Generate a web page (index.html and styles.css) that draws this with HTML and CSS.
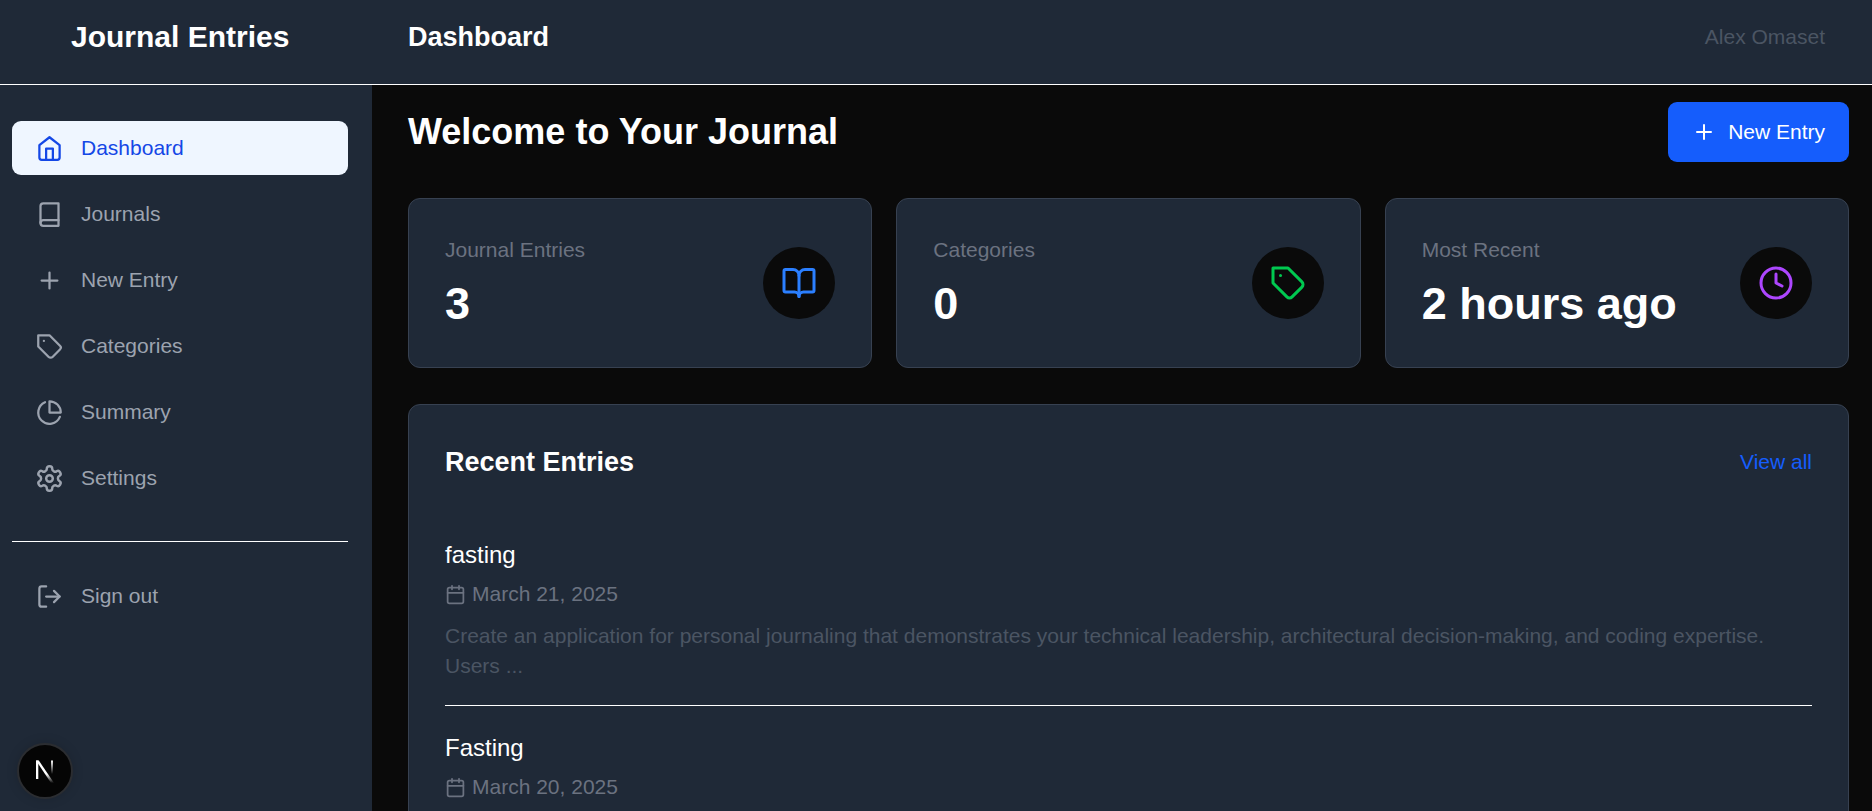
FILE: index.html
```html
<!DOCTYPE html>
<html lang="en">
<head>
  <meta charset="UTF-8">
  <title>Journal Entries</title>
  <link rel="stylesheet" href="styles.css">
</head>
<body>

  <header class="topbar">
    <div class="brand">Journal Entries</div>
    <div class="page-name">Dashboard</div>
    <div class="user-name">Alex Omaset</div>
  </header>

  <div class="layout">
    <aside class="sidebar">
      <nav class="nav">
        <a class="nav-item active">
          <svg class="nav-icon" viewBox="0 0 24 24"><path d="m3 9 9-7 9 7v11a2 2 0 0 1-2 2H5a2 2 0 0 1-2-2z"/><path d="M9 22V12h6v10"/></svg>
          Dashboard
        </a>
        <a class="nav-item">
          <svg class="nav-icon" viewBox="0 0 24 24"><path d="M4 19.500A2.500 2.500 0 0 1 6.500 17H20"/><path d="M6.500 2H20v20H6.500A2.500 2.500 0 0 1 4 19.500v-15A2.500 2.500 0 0 1 6.500 2z"/></svg>
          Journals
        </a>
        <a class="nav-item">
          <svg class="nav-icon" viewBox="0 0 24 24"><path d="M5 12h14"/><path d="M12 5v14"/></svg>
          New Entry
        </a>
        <a class="nav-item">
          <svg class="nav-icon" viewBox="0 0 24 24"><path d="M12 2H2v10l9.290 9.290c.94.94 2.480.94 3.420 0l6.580-6.580c.94-.94.94-2.480 0-3.420L12 2Z"/><path d="M7 7h.01"/></svg>
          Categories
        </a>
        <a class="nav-item">
          <svg class="nav-icon" viewBox="0 0 24 24"><path d="M21.21 15.89A10 10 0 1 1 8 2.83"/><path d="M22 12A10 10 0 0 0 12 2v10z"/></svg>
          Summary
        </a>
        <a class="nav-item">
          <svg class="nav-icon" viewBox="1 1 22 22"><path d="M12.22 2h-.44a2 2 0 0 0-2 2v.18a2 2 0 0 1-1 1.73l-.43.25a2 2 0 0 1-2 0l-.15-.08a2 2 0 0 0-2.73.73l-.22.38a2 2 0 0 0 .73 2.73l.15.1a2 2 0 0 1 1 1.72v.51a2 2 0 0 1-1 1.74l-.15.09a2 2 0 0 0-.73 2.73l.22.38a2 2 0 0 0 2.73.73l.15-.08a2 2 0 0 1 2 0l.43.25a2 2 0 0 1 1 1.73V20a2 2 0 0 0 2 2h.44a2 2 0 0 0 2-2v-.18a2 2 0 0 1 1-1.73l.43-.25a2 2 0 0 1 2 0l.15.08a2 2 0 0 0 2.73-.73l.22-.39a2 2 0 0 0-.73-2.73l-.15-.08a2 2 0 0 1-1-1.74v-.5a2 2 0 0 1 1-1.74l.15-.09a2 2 0 0 0 .73-2.73l-.22-.38a2 2 0 0 0-2.73-.73l-.15.08a2 2 0 0 1-2 0l-.43-.25a2 2 0 0 1-1-1.73V4a2 2 0 0 0-2-2z"/><circle cx="12" cy="12" r="2.700"/></svg>
          Settings
        </a>
      </nav>
      <div class="sidebar-footer">
        <a class="nav-item">
          <svg class="nav-icon" viewBox="0 0 24 24"><path d="M9 21H5a2 2 0 0 1-2-2V5a2 2 0 0 1 2-2h4"/><path d="m16 17 5-5-5-5"/><path d="M21 12H9"/></svg>
          Sign out
        </a>
      </div>
    </aside>

    <main class="content">
      <div class="content-head">
        <h1>Welcome to Your Journal</h1>
        <a class="new-btn">
          <svg class="btn-icon" viewBox="0 0 24 24"><path d="M5 12h14"/><path d="M12 5v14"/></svg>
          New Entry
        </a>
      </div>

      <div class="stats">
        <div class="stat-card">
          <div>
            <div class="stat-label">Journal Entries</div>
            <div class="stat-value">3</div>
          </div>
          <div class="stat-icon blue">
            <svg viewBox="0 0 24 24"><path d="M12 7v14"/><path d="M3 18a1 1 0 0 1-1-1V4a1 1 0 0 1 1-1h5a4 4 0 0 1 4 4 4 4 0 0 1 4-4h5a1 1 0 0 1 1 1v13a1 1 0 0 1-1 1h-6a3 3 0 0 0-3 3 3 3 0 0 0-3-3z"/></svg>
          </div>
        </div>
        <div class="stat-card">
          <div>
            <div class="stat-label">Categories</div>
            <div class="stat-value">0</div>
          </div>
          <div class="stat-icon green">
            <svg viewBox="0 0 24 24"><path d="M12 2H2v10l9.290 9.290c.94.94 2.480.94 3.420 0l6.580-6.580c.94-.94.94-2.480 0-3.420L12 2Z"/><path d="M7 7h.01"/></svg>
          </div>
        </div>
        <div class="stat-card">
          <div>
            <div class="stat-label">Most Recent</div>
            <div class="stat-value">2 hours ago</div>
          </div>
          <div class="stat-icon purple">
            <svg viewBox="0 0 24 24"><circle cx="12" cy="12" r="10"/><path d="M12 6v6l4 2"/></svg>
          </div>
        </div>
      </div>

      <section class="recent">
        <div class="recent-head">
          <h2>Recent Entries</h2>
          <a class="view-all">View all</a>
        </div>

        <article class="entry">
          <h3>fasting</h3>
          <div class="entry-date">
            <svg class="date-icon" viewBox="0 0 24 24"><path d="M8 2v4"/><path d="M16 2v4"/><rect x="3" y="4" width="18" height="18" rx="2"/><path d="M3 10h18"/></svg>
            March 21, 2025
          </div>
          <p>Create an application for personal journaling that demonstrates your technical leadership, architectural decision-making, and coding expertise. Users ...</p>
        </article>

        <article class="entry">
          <h3>Fasting</h3>
          <div class="entry-date">
            <svg class="date-icon" viewBox="0 0 24 24"><path d="M8 2v4"/><path d="M16 2v4"/><rect x="3" y="4" width="18" height="18" rx="2"/><path d="M3 10h18"/></svg>
            March 20, 2025
          </div>
        </article>
      </section>
    </main>
  </div>

  <div class="dev-badge">
    <svg viewBox="0 0 24 24">
      <defs>
        <linearGradient id="nDiag" x1="0" y1="0" x2="0" y2="1">
          <stop offset="0.6" stop-color="#fff"/>
          <stop offset="1" stop-color="#fff" stop-opacity="0"/>
        </linearGradient>
        <linearGradient id="nRight" x1="0" y1="0" x2="0" y2="1">
          <stop offset="0" stop-color="#fff"/>
          <stop offset="1" stop-color="#fff" stop-opacity="0"/>
        </linearGradient>
      </defs>
      <path class="n-left" d="M3 1.500h2.300V20H3z"/>
      <path class="n-diag" d="M3 1.500h2.800L21 24h-3z"/>
      <path class="n-right" d="M18 1.500h2V15h-2z"/>
    </svg>
  </div>

</body>
</html>
```

FILE: styles.css
```css
* {
  box-sizing: border-box;
}
html, body {
  height: 100%;
}
body {
  margin: 0;
  display: flex;
  flex-direction: column;
  overflow: hidden;
  font-family: "Liberation Sans", Arial, sans-serif;
  font-size: 21px;
  line-height: 30px;
  background: #0a0a0a;
  color: #fff;
}
svg {
  fill: none;
  stroke: currentColor;
  stroke-width: 2;
  stroke-linecap: round;
  stroke-linejoin: round;
  flex-shrink: 0;
}

/* top bar */
.topbar {
  display: flex;
  align-items: center;
  height: 85px;
  flex-shrink: 0;
  padding: 0 47px 10px 0;
  background: #1f2937;
  border-bottom: 1px solid #fff;
}
.brand {
  width: 372px;
  padding-left: 71px;
  font-size: 30px;
  font-weight: bold;
}
.page-name {
  flex: 1;
  padding-left: 36px;
  font-size: 27px;
  font-weight: bold;
}
.user-name {
  color: #4b5563;
}

.layout {
  flex: 1;
  display: flex;
  min-height: 0;
}

/* sidebar */
.sidebar {
  width: 372px;
  flex-shrink: 0;
  padding: 36px 24px 0 12px;
  background: #1f2937;
}
.nav {
  display: flex;
  flex-direction: column;
  gap: 12px;
}
.nav-item {
  display: flex;
  align-items: center;
  gap: 18px;
  height: 54px;
  padding: 0 24px;
  border-radius: 9px;
  color: #9ca3af;
}
.nav-item.active {
  background: #eff6ff;
  color: #1447e6;
}
.nav-icon {
  width: 27px;
  height: 27px;
}
.sidebar-footer {
  margin-top: 36px;
  padding-top: 27px;
  border-top: 1px solid #fff;
}

/* main */
.content {
  flex: 1;
  min-width: 0;
  overflow: hidden;
  padding: 17px 23px 0 36px;
}
.content-head {
  display: flex;
  align-items: center;
  justify-content: space-between;
  margin-bottom: 36px;
}
h1 {
  margin: 0;
  font-size: 36px;
  line-height: 54px;
}
.new-btn {
  display: flex;
  align-items: center;
  gap: 12px;
  padding: 15px 24px;
  border-radius: 9px;
  background: #155dfc;
  color: #fff;
}
.btn-icon {
  width: 24px;
  height: 24px;
}

/* stat cards */
.stats {
  display: grid;
  grid-template-columns: repeat(3, 1fr);
  gap: 24px;
  margin-bottom: 36px;
}
.stat-card {
  display: flex;
  align-items: center;
  justify-content: space-between;
  height: 170px;
  padding: 0 36px;
  background: #1f2937;
  border: 1px solid #374151;
  border-radius: 12px;
}
.stat-label {
  color: #6b7280;
}
.stat-value {
  margin-top: 12px;
  font-size: 45px;
  line-height: 54px;
  font-weight: bold;
}
.stat-icon {
  display: flex;
  align-items: center;
  justify-content: center;
  width: 72px;
  height: 72px;
  border-radius: 50%;
  background: #0a0a0a;
}
.stat-icon svg {
  width: 36px;
  height: 36px;
}
.blue { color: #2b7fff; }
.green { color: #00c950; }
.purple { color: #ad46ff; }

/* recent entries */
.recent {
  padding: 36px;
  background: #1f2937;
  border: 1px solid #374151;
  border-radius: 12px;
}
.recent-head {
  display: flex;
  align-items: center;
  justify-content: space-between;
  margin-bottom: 30px;
}
h2 {
  margin: 0;
  font-size: 27px;
  line-height: 42px;
}
.view-all {
  color: #155dfc;
}
.entry {
  padding: 24px 0;
  border-bottom: 1px solid #fff;
}
.entry:last-child {
  border-bottom: none;
}
h3 {
  margin: 0;
  font-size: 24px;
  line-height: 36px;
  font-weight: normal;
}
.entry-date {
  display: flex;
  align-items: center;
  gap: 6px;
  margin-top: 6px;
  color: #6b7280;
}
.date-icon {
  width: 21px;
  height: 21px;
}
.entry p {
  margin: 12px 0 0;
  color: #4b5563;
}

/* dev indicator, sits over the page */
.dev-badge {
  position: fixed;
  left: 17px;
  bottom: 12px;
  display: flex;
  align-items: center;
  justify-content: center;
  width: 56px;
  height: 56px;
  border-radius: 50%;
  background: #050505;
  border: 2px solid #2b2d31;
  box-shadow: 0 0 12px rgba(0, 0, 0, 0.15);
}
.dev-badge svg {
  width: 24px;
  height: 24px;
  stroke: none;
}
.n-left { fill: #fff; }
.n-diag { fill: url(#nDiag); }
.n-right { fill: url(#nRight); }
```
